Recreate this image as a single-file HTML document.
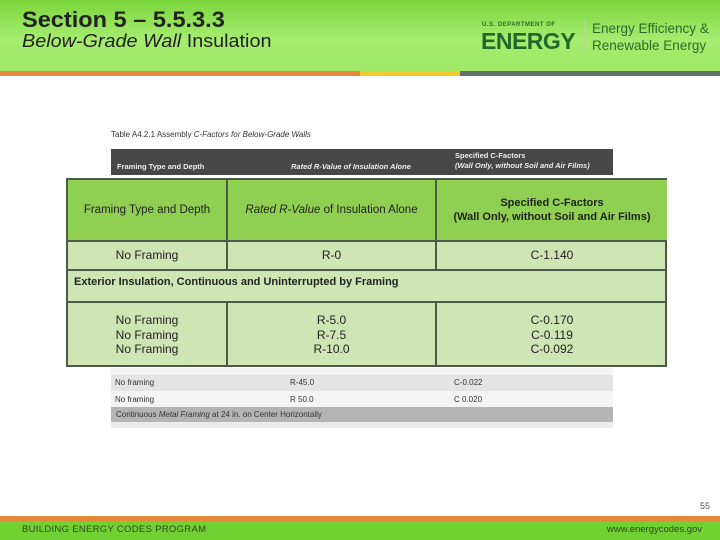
<!DOCTYPE html>
<html><head><meta charset="utf-8"><style>
*{margin:0;padding:0;box-sizing:border-box}
body{width:720px;height:540px;position:relative;background:#fff;font-family:"Liberation Sans",sans-serif;overflow:hidden}
.hdr{position:absolute;left:0;top:0;width:720px;height:72px;background:linear-gradient(#7ad63c,#a6ec70 55%,#9fe865)}
.a{position:absolute;white-space:nowrap}
.stripe{position:absolute;top:71px;height:5px}
.bt{position:absolute;left:111px;width:502px}
.ov{position:absolute;left:66px;top:178px;width:601px;height:189px;border:2px solid #4d5a48;background:#cde6b4}
.ov div{position:absolute;border-right:2px solid #4d5a48;border-bottom:2px solid #4d5a48;font-size:12px;color:#222;display:flex;align-items:center;justify-content:center;text-align:center;line-height:14.5px}
</style></head><body>
<div class="hdr"></div>
<div class="a" style="left:22px;top:7px;font-size:22px;font-weight:bold;color:#222;transform:scaleX(1.07);transform-origin:left">Section 5 – 5.5.3.3</div>
<div class="a" style="left:22px;top:31px;font-size:18px;color:#222;transform:scaleX(1.1);transform-origin:left"><i>Below-Grade Wall</i> Insulation</div>
<div class="a" style="left:482px;top:22px;font-size:6px;font-weight:bold;color:#2d6a2a;letter-spacing:.5px">U.S. DEPARTMENT OF</div>
<div class="a" style="left:481px;top:28px;font-size:23px;font-weight:bold;color:#1f6a2b;letter-spacing:-.5px">ENERGY</div>
<div style="position:absolute;left:584px;top:20px;width:1px;height:32px;background:#b5d890"></div>
<div class="a" style="left:592px;top:21px;font-size:13.5px;color:#2d6a2a">Energy Efficiency &amp;</div>
<div class="a" style="left:592px;top:38px;font-size:13.5px;color:#2d6a2a">Renewable Energy</div>
<div class="stripe" style="left:0;width:360px;background:#e6883a"></div>
<div class="stripe" style="left:360px;width:100px;background:#f2cc2c"></div>
<div class="stripe" style="left:460px;width:260px;background:#666c70"></div>

<div class="a" style="left:111px;top:130px;font-size:8px;color:#333">Table A4.2.1 Assembly <i>C-Factors for Below-Grade Walls</i></div>
<div class="bt" style="top:149px;height:26px;background:#474747"></div>
<div class="a" style="left:117px;top:162px;font-size:7.5px;color:#eee;font-weight:bold">Framing Type and Depth</div>
<div class="a" style="left:291px;top:162px;font-size:7.5px;color:#eee;font-weight:bold;font-style:italic">Rated R-Value of Insulation Alone</div>
<div class="a" style="left:455px;top:151px;font-size:7.5px;color:#eee;font-weight:bold;line-height:10px">Specified C-Factors<br><i>(Wall Only, without Soil and Air Films)</i></div>
<div class="bt" style="top:368px;height:7px;background:#f4f4f4"></div>
<div class="bt" style="top:375px;height:16px;background:#e4e4e4"></div>
<div class="bt" style="top:391px;height:16px;background:#f4f4f4"></div>
<div class="bt" style="top:407px;height:15px;background:#b4b4b4"></div>
<div class="bt" style="top:422px;height:6px;background:#ececec"></div>
<div class="a" style="left:115px;top:378px;font-size:8px;color:#333">No framing</div>
<div class="a" style="left:290px;top:378px;font-size:8px;color:#333">R-45.0</div>
<div class="a" style="left:454px;top:378px;font-size:8px;color:#333">C-0.022</div>
<div class="a" style="left:115px;top:395px;font-size:8px;color:#333">No framing</div>
<div class="a" style="left:290px;top:395px;font-size:8px;color:#333">R 50.0</div>
<div class="a" style="left:454px;top:395px;font-size:8px;color:#333">C 0.020</div>
<div class="a" style="left:116px;top:410px;font-size:8px;color:#333">Continuous <i>Metal Framing</i> at 24 in. on Center Horizontally</div>

<div class="ov">
<div style="left:0;top:0;width:160px;height:62px;background:#8fcf52;font-size:11.5px">Framing Type and Depth</div>
<div style="left:160px;top:0;width:209px;height:62px;background:#8fcf52;font-size:11.5px"><span><i>Rated R-Value</i> of Insulation Alone</span></div>
<div style="left:369px;top:0;width:230px;height:62px;background:#8fcf52;font-weight:bold;font-size:11px;border-right:none">Specified C-Factors<br>(Wall Only, without Soil and Air Films)</div>
<div style="left:0;top:62px;width:160px;height:29px">No Framing</div>
<div style="left:160px;top:62px;width:209px;height:29px">R-0</div>
<div style="left:369px;top:62px;width:230px;height:29px;border-right:none">C-1.140</div>
<div style="left:0;top:91px;width:599px;height:32px;border-right:none;justify-content:flex-start;align-items:flex-start;padding:4px 0 0 6px;font-weight:bold;font-size:11px">Exterior Insulation, Continuous and Uninterrupted by Framing</div>
<div style="left:0;top:123px;width:160px;height:64px;border-bottom:none">No Framing<br>No Framing<br>No Framing</div>
<div style="left:160px;top:123px;width:209px;height:64px;border-bottom:none">R-5.0<br>R-7.5<br>R-10.0</div>
<div style="left:369px;top:123px;width:230px;height:64px;border:none">C-0.170<br>C-0.119<br>C-0.092</div>
</div>

<div class="a" style="left:700px;top:501px;font-size:9px;color:#555">55</div>
<div style="position:absolute;left:0;top:516px;width:720px;height:5px;background:#e6883a"></div>
<div style="position:absolute;left:0;top:521px;width:720px;height:19px;background:#72d132"></div>
<div class="a" style="left:22px;top:524px;font-size:9.5px;color:#2a4a20;letter-spacing:.3px">BUILDING ENERGY CODES PROGRAM</div>
<div class="a" style="left:607px;top:524px;font-size:9.5px;color:#2a4a20">www.energycodes.gov</div>
</body></html>
